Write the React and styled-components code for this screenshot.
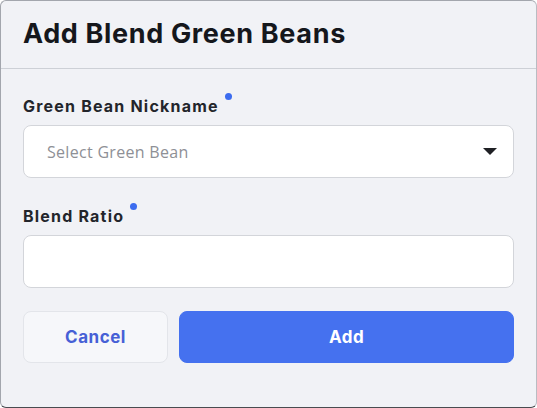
import React from 'react';
import styled, { createGlobalStyle } from 'styled-components';

const GlobalStyle = createGlobalStyle`
  * { box-sizing: border-box; }
  html, body { margin: 0; padding: 0; background: #ffffff; }
`;

function App() {
  return (
    <>
      <GlobalStyle />
      <Dialog>
        <Header>
          <Title>Add Blend Green Beans</Title>
        </Header>
        <Body>
          <Field>
            <Label>
              Green Bean Nickname
              <Required />
            </Label>
            <SelectBox>
              <Placeholder>Select Green Bean</Placeholder>
              <Caret />
            </SelectBox>
          </Field>
          <Field>
            <Label>
              Blend Ratio
              <Required />
            </Label>
            <TextInput type="text" />
          </Field>
          <Actions>
            <Button>Cancel</Button>
            <Button primary>Add</Button>
          </Actions>
        </Body>
      </Dialog>
    </>
  );
}

const Dialog = styled.div`
  width: 537px;
  height: 408px;
  background: #f1f2f6;
  border: 1px solid #a3a6ad;
  border-bottom-color: #4a4c50;
  border-right-color: #b9bcc2;
  border-radius: 6px;
  overflow: hidden;
  display: flex;
  flex-direction: column;
`;

const Header = styled.div`
  height: 68px;
  flex-shrink: 0;
  padding: 0 22px;
  display: flex;
  align-items: center;
  border-bottom: 1px solid #cdd0d6;
`;

const Title = styled.h1`
  margin: 0;
  padding-bottom: 2px;
  font-family: Inter, 'Liberation Sans', sans-serif;
  font-size: 27px;
  font-weight: 700;
  letter-spacing: 0.65px;
  color: #15171c;
`;

const Body = styled.div`
  padding: 27px 22px 0 22px;
  display: flex;
  flex-direction: column;
  gap: 23px;
`;

const Field = styled.div`
  display: flex;
  flex-direction: column;
  & + & {
    margin-top: 5px;
  }
`;

const Label = styled.label`
  position: relative;
  align-self: flex-start;
  font-family: Inter, 'Liberation Sans', sans-serif;
  font-size: 16px;
  font-weight: 700;
  letter-spacing: 1.2px;
  color: #23252b;
  line-height: 20px;
  margin-bottom: 9px;
  padding-right: 13px;
`;

const Required = styled.span`
  position: absolute;
  right: 0;
  top: -3px;
  width: 7px;
  height: 7px;
  border-radius: 50%;
  background: #3c6cef;
`;

const SelectBox = styled.div`
  height: 53px;
  background: #ffffff;
  border: 1px solid #d3d5da;
  border-radius: 8px;
  display: flex;
  align-items: center;
  justify-content: space-between;
  padding: 0 16px 0 23px;
`;

const Placeholder = styled.span`
  font-family: 'Open Sans', 'Liberation Sans', sans-serif;
  font-size: 16px;
  letter-spacing: 0.3px;
  color: #8e9096;
`;

const Caret = styled.span`
  width: 0;
  height: 0;
  border-left: 7px solid transparent;
  border-right: 7px solid transparent;
  border-top: 7px solid #1f2024;
`;

const TextInput = styled.input`
  height: 53px;
  background: #ffffff;
  border: 1px solid #d3d5da;
  border-radius: 8px;
  padding: 0 24px;
  font-size: 15px;
  outline: none;
`;

const Actions = styled.div`
  display: flex;
  gap: 11px;
`;

const Button = styled.button`
  flex: ${p => (p.primary ? '1' : '0 0 145px')};
  height: 52px;
  border-radius: 8px;
  border: 1px solid ${p => (p.primary ? '#4571ef' : '#e3e5ea')};
  background: ${p => (p.primary ? '#4571ef' : '#f6f7fa')};
  color: ${p => (p.primary ? '#ffffff' : '#4660d6')};
  font-family: Inter, 'Liberation Sans', sans-serif;
  font-size: 17px;
  font-weight: 700;
  letter-spacing: 0.5px;
  cursor: pointer;
`;

export default App;
